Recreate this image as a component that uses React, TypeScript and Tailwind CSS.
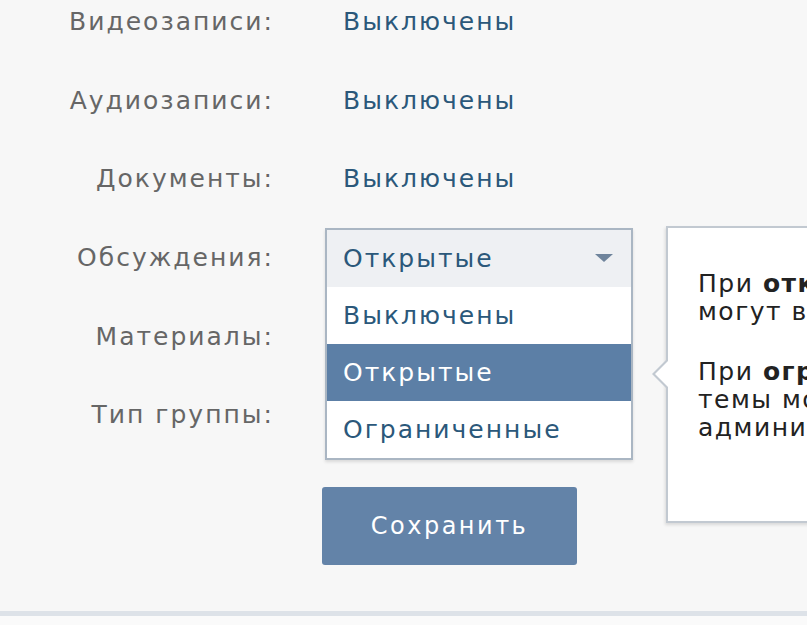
import { useState } from "react";

type Row = { label: string; value: string };

const rows: Row[] = [
  { label: "Видеозаписи:", value: "Выключены" },
  { label: "Аудиозаписи:", value: "Выключены" },
  { label: "Документы:", value: "Выключены" },
];

const options = ["Выключены", "Открытые", "Ограниченные"];

function Tooltip() {
  return (
    <div className="absolute left-[378px] top-[-2px] flex items-center">
      <div className="relative z-10 mr-[-2px] h-0 w-0 border-y-[16px] border-r-[16px] border-y-transparent border-r-[#c2c9d1]">
        <div className="absolute left-[3px] top-[-14px] h-0 w-0 border-y-[14px] border-r-[14px] border-y-transparent border-r-white" />
      </div>
      <div className="h-[297px] w-[520px] whitespace-nowrap border-2 border-[#c2c9d1] bg-white pl-[30px] pt-[42px] leading-[28px] tracking-[1.5px] text-[#222] shadow-[-1px_2px_3px_rgba(0,0,0,0.12)]">
        <p>
          При <b>открытых</b> обсуждениях все участники
          <br />
          могут вести новые темы.
        </p>
        <p className="mt-[32px]">
          При <b>ограниченных</b> обсуждениях новые
          <br />
          темы могут создавать только
          <br />
          администраторы сообщества.
        </p>
      </div>
    </div>
  );
}

function Select() {
  const [value, setValue] = useState("Открытые");
  return (
    <div className="relative h-[60px] w-[308px]">
      <div className="absolute left-0 top-0 z-10 w-[308px] border-2 border-[#aab6c3] bg-white shadow-[0_2px_3px_rgba(0,0,0,0.12)]">
        <div className="flex h-[57px] items-center justify-between bg-[#eef0f3] pl-[16px] pr-[18px] text-[#2b587a]">
          <span>{value}</span>
          <svg width="18" height="9" viewBox="0 0 18 9">
            <path d="M0 0h18L9 8z" fill="#6f849c" />
          </svg>
        </div>
        {options.map((o) => (
          <div
            key={o}
            onClick={() => setValue(o)}
            className={
              o === value
                ? "flex h-[57px] items-center bg-[#5c7fa6] pl-[16px] text-white"
                : "flex h-[57px] items-center pl-[16px] text-[#2b587a]"
            }
          >
            {o}
          </div>
        ))}
      </div>
    </div>
  );
}

export default function App() {
  return (
    <div className="relative h-[625px] w-[807px] overflow-hidden bg-[#f7f7f7] font-['DejaVu_Sans',sans-serif] text-[25px] tracking-[2px]">
      <div className="flex flex-col gap-[34.6px]">
        {rows.map((r) => (
          <div key={r.label} className="flex h-[44px] items-center">
            <div className="w-[274px] text-right text-[#666]">{r.label}</div>
            <div className="pl-[69px] text-[#2b587a]">{r.value}</div>
          </div>
        ))}
        <div className="relative flex h-[44px] items-center">
          <div className="w-[274px] text-right text-[#666]">Обсуждения:</div>
          <div className="relative z-10 pl-[51px]">
            <Select />
            <Tooltip />
          </div>
        </div>
        <div className="flex h-[44px] items-center">
          <div className="w-[274px] text-right text-[#666]">Материалы:</div>
        </div>
        <div className="flex h-[44px] items-center">
          <div className="w-[274px] text-right text-[#666]">Тип группы:</div>
        </div>
      </div>
      <div className="mt-[50px] pl-[322px]">
        <button className="h-[78px] w-[255px] rounded-[3px] bg-[#6383a8] text-[24px] tracking-[2.5px] text-white">
          Сохранить
        </button>
      </div>
      <div className="mt-[46px] h-[5px] bg-[#dde2e8]" />
      <div className="h-[20px] bg-[#fafafa]" />
    </div>
  );
}
